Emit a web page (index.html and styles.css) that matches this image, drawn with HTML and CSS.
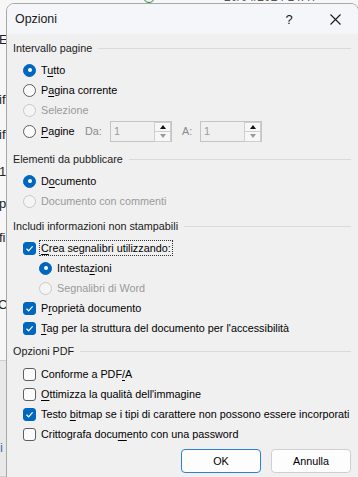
FILE: index.html
```html
<!DOCTYPE html>
<html lang="it">
<head>
  <meta charset="UTF-8" />
  <title>Opzioni</title>
  <link rel="stylesheet" href="styles.css">
</head>
<body>
  <!-- documento dietro la finestra -->
  <div class="desk">
    <span class="frag f-date">20/04/2024 14:47</span>
    <span class="frag f-arc"></span>
    <span class="frag f-e">E.</span>
    <span class="frag f-if1">if</span>
    <span class="frag f-if2">if</span>
    <span class="frag f-1">1.</span>
    <span class="frag f-p">p</span>
    <span class="frag f-fi">fi</span>
    <span class="frag f-c">C/</span>
    <span class="frag f-band"></span>
    <span class="frag f-i">i</span>
  </div>

  <div class="dialog">
    <div class="titlebar">
      <span class="title">Opzioni</span>
      <span class="cap">?</span>
      <span class="cap">
        <svg width="11" height="11" viewBox="0 0 11 11"><path d="M0.5 0.5 L10.5 10.5 M10.5 0.5 L0.5 10.5" stroke="#1a1a1a" stroke-width="1.1" fill="none"/></svg>
      </span>
    </div>

    <div class="body">
      <div class="group">
        <div class="legend">Intervallo pagine</div>
        <div class="row"><span class="radio on"></span><span>T<u>u</u>tto</span></div>
        <div class="row"><span class="radio"></span><span>P<u>a</u>gina corrente</span></div>
        <div class="row disabled"><span class="radio"></span><span>Selezione</span></div>
        <div class="row pages">
          <span class="pg-label"><span class="radio"></span><span><u>P</u>agine</span></span>
          <span class="spin-label">Da:</span>
          <span class="spin">
            <span class="spin-val">1</span>
            <span class="arrows"><span class="arr up"></span><span class="arr down"></span></span>
          </span>
          <span class="spin-label to">A:</span>
          <span class="spin">
            <span class="spin-val">1</span>
            <span class="arrows"><span class="arr up"></span><span class="arr down"></span></span>
          </span>
        </div>
      </div>

      <div class="group g2">
        <div class="legend">Elementi da pubblicare</div>
        <div class="row"><span class="radio on"></span><span>D<u>o</u>cumento</span></div>
        <div class="row disabled"><span class="radio"></span><span>Documento con commenti</span></div>
      </div>

      <div class="group g3">
        <div class="legend">Includi informazioni non stampabili</div>
        <div class="row"><span class="check on"></span><span class="focus"><u>C</u>rea segnalibri utilizzando:</span></div>
        <div class="row sub"><span class="radio on"></span><span>Intesta<u>z</u>ioni</span></div>
        <div class="row sub disabled"><span class="radio"></span><span>Segnalibri di Word</span></div>
        <div class="row"><span class="check on"></span><span>P<u>r</u>oprietà documento</span></div>
        <div class="row"><span class="check on"></span><span><u>T</u>ag per la struttura del documento per l'accessibilità</span></div>
      </div>

      <div class="group g4">
        <div class="legend">Opzioni PDF</div>
        <div class="row"><span class="check"></span><span>Conforme a PDF<u>/</u>A</span></div>
        <div class="row"><span class="check"></span><span><u>O</u>ttimizza la qualità dell'immagine</span></div>
        <div class="row"><span class="check on"></span><span>Testo <u>b</u>itmap se i tipi di carattere non possono essere incorporati</span></div>
        <div class="row"><span class="check"></span><span>Crittografa docu<u>m</u>ento con una password</span></div>
      </div>

      <div class="buttons">
        <button class="btn default">OK</button>
        <button class="btn">Annulla</button>
      </div>
    </div>
  </div>
</body>
</html>
```

FILE: styles.css
```css
body {
  margin: 0;
  width: 358px;
  height: 477px;
  overflow: hidden;
  background: #f7f7f7;
  font-family: "Liberation Sans", Arial, sans-serif;
  font-size: 10.8px;
  color: #1a1a1a;
}

/* sfondo: pezzi del documento Word */
.desk {
  position: absolute;
  top: 0; left: 0;
  width: 358px; height: 477px;
}
.frag {
  position: absolute;
  font-size: 13px;
  line-height: 14px;
  color: #222;
}
.f-date { top: -10px; left: 224px; color: #555; font-size: 12px; }
.f-arc {
  top: -9px; left: 143px;
  width: 10px; height: 10px;
  border: 1.5px solid #2f8f3f;
  border-radius: 50%;
}
.f-e { top: 33px; left: -1px; }
.f-if1 { top: 93px; left: -1px; }
.f-if2 { top: 128px; left: -1px; }
.f-1 { top: 165px; left: -1px; }
.f-p { top: 197px; left: -1px; }
.f-fi { top: 231px; left: -1px; }
.f-c { top: 298px; left: -2px; }
.f-band {
  top: 360px; left: 0;
  width: 7px; height: 117px;
  background: #e9e9e9;
  border-top: 1px solid #d0d0d0;
  border-bottom: 1px solid #d0d0d0;
  box-sizing: border-box;
}
.f-i { top: 441px; left: 0; color: #3b6fb6; }

/* finestra */
.dialog {
  position: absolute;
  top: 3px;
  left: 6px;
  width: 353px;
  height: 480px;
  box-sizing: border-box;
  border: 1px solid #a8a8a8;
  border-radius: 8px 8px 0 0;
  background: #f0f0f0;
  overflow: hidden;
}

.titlebar {
  display: flex;
  align-items: center;
  height: 30px;
  background: #f4f6f9;
}
.title {
  flex: 1;
  padding-left: 8px;
  font-size: 12.4px;
  color: #1a1a1a;
}
.cap {
  width: 46px;
  height: 30px;
  display: flex;
  align-items: center;
  justify-content: center;
  font-size: 13px;
}

.body {
  padding: 4px 7px 0 6px;
}

.legend {
  display: flex;
  align-items: center;
  gap: 6px;
  height: 20px;
  margin-bottom: 2px;
  color: #1a1a1a;
}
.legend::after {
  content: "";
  flex: 1;
  border-top: 1px solid #dadada;
}
.g2 { margin-top: 7px; }
.g3 { margin-top: 5px; }
.g4 { margin-top: 3px; }
.g4 .legend { margin-bottom: 3px; }

.row {
  display: flex;
  align-items: center;
  gap: 5px;
  height: 20px;
  padding-left: 10px;
  color: #000;
  white-space: nowrap;
}
.row.sub { padding-left: 26px; }
.row.disabled { color: #9a9a9a; }
u { text-decoration-thickness: 1px; text-underline-offset: 2px; }

.radio {
  width: 13px;
  height: 13px;
  box-sizing: border-box;
  border: 1px solid #5e5e5e;
  border-radius: 50%;
  background: #fbfbfb;
  flex: none;
  position: relative;
}
.radio.on {
  background: #0067c0;
  border-color: #0067c0;
}
.radio.on::after {
  content: "";
  position: absolute;
  top: 3.5px; left: 3.5px;
  width: 4px; height: 4px;
  border-radius: 50%;
  background: #fff;
}
.disabled .radio {
  border-color: #c9c9c9;
  background: #f5f5f5;
}

.check {
  width: 13px;
  height: 13px;
  box-sizing: border-box;
  border: 1px solid #5e5e5e;
  border-radius: 3px;
  background: #fbfbfb;
  flex: none;
}
.check.on {
  border-color: #0067c0;
  background: #0067c0 url("data:image/svg+xml,%3Csvg xmlns='http://www.w3.org/2000/svg' width='11' height='11' viewBox='0 0 11 11'%3E%3Cpath d='M2.5 5.8 L4.6 7.8 L8.6 3.4' stroke='white' stroke-width='1.2' fill='none'/%3E%3C/svg%3E") center no-repeat;
}

.focus {
  outline: 1px dotted #333;
  outline-offset: 0;
  padding: 1px 1px;
  margin-left: -1px;
}

/* riga Pagine con i campi numerici */
.row.pages { height: 22px; gap: 0; }
.pg-label {
  display: flex;
  align-items: center;
  gap: 5px;
  width: 62px;
}
.spin-label {
  width: 25px;
  color: #8a8a8a;
}
.spin-label.to { width: 18px; margin-left: 10px; }
.spin {
  display: flex;
  width: 62px;
  height: 21px;
  box-sizing: border-box;
  border: 1px solid #c4c4c4;
  background: #f0f0f0;
}
.spin-val {
  flex: 1;
  padding-left: 3px;
  line-height: 19px;
  color: #9a9a9a;
}
.arrows {
  display: flex;
  flex-direction: column;
  width: 16px;
  border-left: 1px solid #d6d6d6;
}
.arr {
  flex: 1;
  display: flex;
  align-items: center;
  justify-content: center;
  background: #f7f7f7;
  border: 1px solid #cfcfcf;
  margin: 0 0 -1px -1px;
}
.arr::after {
  content: "";
  border-left: 3.5px solid transparent;
  border-right: 3.5px solid transparent;
}
.arr.up::after { border-bottom: 4px solid #111; }
.arr.down::after { border-top: 4px solid #9a9a9a; }

.buttons {
  display: flex;
  justify-content: flex-end;
  gap: 10px;
  margin-top: 5px;
}
.btn {
  width: 80px;
  height: 24px;
  box-sizing: border-box;
  border: 1px solid #d0d0d0;
  border-radius: 4px;
  background: #fdfdfd;
  font-family: inherit;
  font-size: 10.8px;
  color: #000;
  padding: 0;
}
.btn.default {
  border-color: #2f7fd0;
}
```
